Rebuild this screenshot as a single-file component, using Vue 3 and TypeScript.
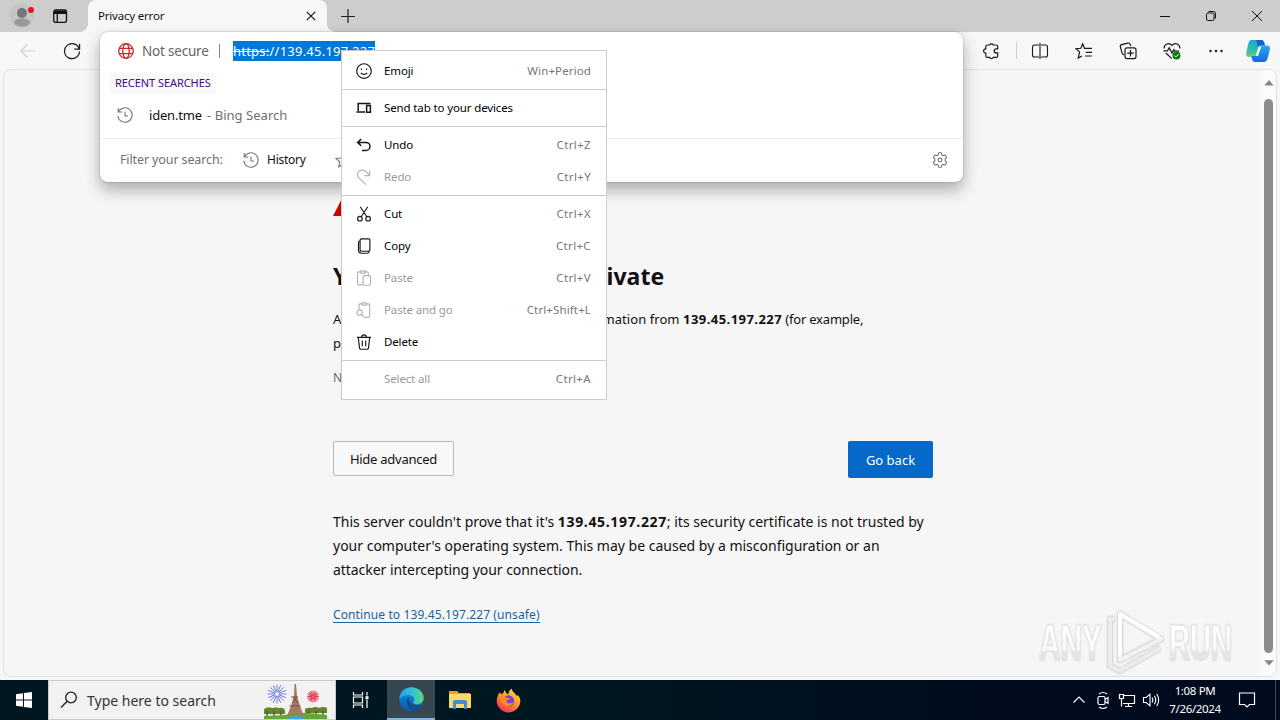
<script setup lang="ts">
interface MenuEntry {
  label: string
  keys?: string
  icon?: string
  off?: boolean
}

const groups: MenuEntry[][] = [
  [{ label: 'Emoji', keys: 'Win+Period', icon: 'emoji' }],
  [{ label: 'Send tab to your devices', icon: 'devices' }],
  [
    { label: 'Undo', keys: 'Ctrl+Z', icon: 'undo' },
    { label: 'Redo', keys: 'Ctrl+Y', icon: 'redo', off: true },
  ],
  [
    { label: 'Cut', keys: 'Ctrl+X', icon: 'cut' },
    { label: 'Copy', keys: 'Ctrl+C', icon: 'copy' },
    { label: 'Paste', keys: 'Ctrl+V', icon: 'paste', off: true },
    { label: 'Paste and go', keys: 'Ctrl+Shift+L', icon: 'pastego', off: true },
    { label: 'Delete', icon: 'trash' },
  ],
  [{ label: 'Select all', keys: 'Ctrl+A', off: true }],
]

const icons: Record<string, string> = {
  emoji: 'M8 .7a7.3 7.3 0 1 0 0 14.6A7.3 7.3 0 0 0 8 .7M5.4 5.6v1.3M10.6 5.6v1.3M4.8 9.8c1.5 2 4.9 2 6.4 0',
  devices: 'M2.2 11V3.6h12.3M.4 12h8.7M10.6 5.6h3.8v6.6h-3.8z',
  undo: 'M5.2 2 1.600 5.400l3.600 3.400M1.800 5.400h8.200a4 4 0 0 1 0 8H6',
  redo: 'M13.6 1.4v5.2H8.4M13.4 6.4 10.6 3C7.6-.1 3.300 1 2 3.600c-1 2-.4 3.900 1.200 5.500l6.800 6.500',
  cut: 'M4.300.8l6.700 10.200M11.700.8 5 11M3.900 10.400a2.300 2.300 0 1 0 0 4.600 2.300 2.300 0 0 0 0-4.600M12.100 10.400a2.300 2.300 0 1 0 0 4.600 2.300 2.300 0 0 0 0-4.600',
  copy: 'M5.600.8h6.800a1.500 1.500 0 0 1 1.500 1.500v9.400a1.500 1.500 0 0 1-1.500 1.500H5.600a1.500 1.500 0 0 1-1.500-1.500V2.300A1.500 1.500 0 0 1 5.600.8M4 2.700c-1 .3-1.500 1-1.500 2v7.600c0 1.900 1 2.900 3 2.900h5.800c.9 0 1.600-.6 1.800-1.700',
  paste: 'M6.500 14.800H2.600a1.100 1.100 0 0 1-1.100-1.100V3a1.100 1.100 0 0 1 1.100-1.100h2.200M9.200 1.900h2A1.100 1.100 0 0 1 12.300 3v1.800M4.800.8h4.400v2.300H4.800zM8.200 5.600h5.200a1.100 1.100 0 0 1 1.100 1.100v7.400a1.100 1.100 0 0 1-1.100 1.100H8.200a1.100 1.100 0 0 1-1.100-1.100V6.700a1.100 1.100 0 0 1 1.100-1.100',
  pastego: 'M3 7V3a1.100 1.100 0 0 1 1.100-1.100h2M10.500 1.900h2A1.100 1.100 0 0 1 13.600 3v11.200a1.100 1.100 0 0 1-1.100 1.100H8.500M6.100.8h4.400v2.300H6.100zM3.600 7.800a2.700 2.700 0 1 0 0 5.400 2.700 2.700 0 0 0 0-5.400M5.600 12.500 8 15',
  trash: 'M.9 3.400h14.200M5.700 3.200a2.300 2.300 0 0 1 4.600 0M2.300 3.600l1.200 10.300a1.400 1.400 0 0 0 1.400 1.300h6.200a1.400 1.400 0 0 0 1.400-1.300l1.200-10.300M6.300 6.400v5.800M9.700 6.400v5.800',
}

const rays: number[] = Array.from({ length: 16 }, (_, i) => i * 22.5)
</script>

<template>
  <div class="screen">
    <header class="tabs">
      <svg class="avatar" width="28" height="28" viewBox="0 0 28 28">
        <circle cx="14" cy="13.500" r="12" fill="#c4c4c4" />
        <circle cx="14" cy="11" r="5" fill="#777" />
        <path d="M6 21c0-3 3-4.500 8-4.500s8 1.500 8 4.500c-1.500 3-5 3.700-8 3.700s-6.500-.7-8-3.700z" fill="#999" />
        <circle cx="23" cy="8" r="3" fill="#e8111a" />
      </svg>
      <svg class="tabmenu" width="16" height="16" viewBox="0 0 16 16" fill="none" stroke="#111" stroke-width="1.300">
        <rect x="1.700" y="2" width="12.800" height="12.300" rx="2" />
        <path d="M2 3.700h12.300M2 5h12.300" stroke-width="1.800" />
        <path d="M5.300 5v9" />
      </svg>
      <div class="tab">
        <span>Privacy error</span>
        <svg width="10" height="10" viewBox="0 0 10 10" stroke="#111" stroke-width="1.200"><path d="M.8.8l8.400 8.400M9.200.8.8 9.200" /></svg>
      </div>
      <svg class="plus" width="14" height="14" viewBox="0 0 14 14" stroke="#222" stroke-width="1.200"><path d="M7 0v14M0 7.500h14" /></svg>
      <div class="winbtns">
        <svg width="12" height="12" viewBox="0 0 12 12" fill="none" stroke="#111"><path d="M1 6.500h10" /></svg>
        <svg width="12" height="12" viewBox="0 0 12 12" fill="none" stroke="#111"><rect x="1.500" y="3" width="7.500" height="7.500" rx="1.500" /><path d="M3.500 1.500h5a2 2 0 0 1 2 2v5" /></svg>
        <svg width="12" height="12" viewBox="0 0 12 12" fill="none" stroke="#111"><path d="M1 1l10 10M11 1 1 11" /></svg>
      </div>
    </header>

    <div class="toolbar">
      <svg class="back" width="16" height="16" viewBox="0 0 16 16" fill="none" stroke="#d0d0d0" stroke-width="1.200"><path d="M15.500 8H.8M7.200 1.500.8 8l6.400 6.500" /></svg>
      <svg class="reload" width="18" height="18" viewBox="0 0 18 18" fill="none" stroke="#181818" stroke-width="1.200"><path d="M16.200 7A7.500 7.500 0 1 0 16.500 9.500M16.600 1.700v5.500h-5.200" /></svg>
      <div class="tools">
        <svg width="18" height="18" viewBox="0 0 18 18" fill="none" stroke="#181818" stroke-width="1.200"><path d="M5.300 3h2.400a2 2 0 0 1 3.600 0h2.900a1.500 1.500 0 0 1 1.500 1.500v2.400h-1.500a2 2 0 0 0 0 4h1.500v3a1.500 1.500 0 0 1-1.500 1.500h-2.900a2 2 0 0 1-3.600 0H5.300a1.500 1.500 0 0 1-1.500-1.500v-2.700a2.200 2.200 0 0 1 0-4.400V4.500A1.500 1.500 0 0 1 5.300 3z" /></svg>
        <i class="bar"></i>
        <svg class="split" width="18" height="18" viewBox="0 0 18 18" fill="none" stroke="#181818" stroke-width="1.100"><path d="M6.500 3H3.500a2 2 0 0 0-2 2v8a2 2 0 0 0 2 2h3M11.500 3h3a2 2 0 0 1 2 2v8a2 2 0 0 1-2 2h-3M6.500 3H8M10 3h1.500M6.500 15H8M10 15h1.500M9 1v16" /></svg>
        <svg width="18" height="18" viewBox="0 0 18 18" fill="none" stroke="#181818" stroke-width="1.200"><path d="M9.500 6.500 7.700 1.800 5.800 6.300l-4.900.4 3.700 3.200-1.400 6.200L7 14M7.700 1.800 9.500 6.400H17M10.800 10.300H17M10.200 14h6.600" /></svg>
        <svg width="18" height="18" viewBox="0 0 18 18" fill="none" stroke="#181818" stroke-width="1.200"><rect x="6" y="5.800" width="11" height="10.800" rx="2" /><path d="M11.500 8v6.500M8.300 11.200h6.500M5 12.800C3.500 12.500 3.200 11.700 3 10.900L1.400 4.800c-.3-1 .2-1.900 1.200-2.200l6.300-1.500c1.200-.3 2 .2 2.300 1.300l.5 1.700" /></svg>
        <svg width="18" height="18" viewBox="0 0 18 18" fill="none" stroke="#181818" stroke-width="1.200"><path d="M1.200 6.500C.8 2.200 6-.3 9 3.500c3-3.800 8.200-1.300 7.800 3M2.800 11l6 5.600M.5 8.800h4l1.700-3 2.900 5.300 1.700-3.400 1.200 1.500h4" /><circle cx="13.500" cy="13.500" r="4" fill="#107c10" stroke="none" /><path d="m11.500 13.500 1.400 1.400 2.700-2.700" stroke="#fff" stroke-width="1" /></svg>
        <svg width="18" height="18" viewBox="0 0 18 18" fill="#181818"><circle cx="3.500" cy="9" r="1.200" /><circle cx="9" cy="9" r="1.200" /><circle cx="14.500" cy="9" r="1.200" /></svg>
      </div>
      <svg class="copilot" width="24" height="24" viewBox="0 0 24 24">
        <defs>
          <linearGradient id="cpA" x1="0" y1="0" x2="0" y2="1"><stop offset="0" stop-color="#17a5d9" /><stop offset=".6" stop-color="#34bea6" /><stop offset="1" stop-color="#70cc82" /></linearGradient>
          <linearGradient id="cpB" x1="0" y1="0" x2="0" y2="1"><stop offset="0" stop-color="#2aa8eb" /><stop offset="1" stop-color="#1767dc" /></linearGradient>
        </defs>
        <path d="M5.500 1h9.800c1.500 0 2.400 1 2.800 2.300L19 6.500h-5.600L10 16.500 3 18c-2.400 0-3.300-2-2.700-4.500L2.500 4C3 2 4 1 5.500 1z" fill="url(#cpA)" />
        <path d="M10 1h5.300c1.500 0 2.400 1 2.800 2.300L19 6.500h-4c-1.500 0-2.200.7-2.800 2z" fill="#1760c4" />
        <path d="M15 6.500h6c2.500 0 3.400 2 2.800 4.300l-2.200 8.500c-.5 2-1.700 3.700-4 3.700H9c-1.800 0-2.500-1.200-3-3L5.200 17h3c1.600 0 2.300-1 2.700-2.500L12.700 9c.4-1.500.9-2.500 2.300-2.500z" fill="url(#cpB)" />
        <path d="M12.700 7.500h2.700L12 17H9.700z" fill="#f4fbff" />
      </svg>
    </div>

    <main class="page">
      <div class="content">
        <svg class="warn" width="72" height="72" viewBox="0 0 72 72"><path d="M36 0 72 70H0z" fill="#d00000" /></svg>
        <h1>Your connection isn't private</h1>
        <p class="lead"><span>Attackers might be trying to steal your information from <b>139.45.197.227</b><span class="tail"> (for example,</span></span><br />passwords, messages, or credit cards).</p>
        <p class="code">NET::ERR_CERT_AUTHORITY_INVALID</p>
        <div class="buttons"><button class="plain">Hide advanced</button><button class="blue">Go back</button></div>
        <p class="body"><span>This server couldn't prove that it's <b>139.45.197.227</b>; its security certificate is not trusted by</span><br /><span>your computer's operating system. This may be caused by a misconfiguration or an</span><br /><span class="l3">attacker intercepting your connection.</span></p>
        <a class="unsafe">Continue to 139.45.197.227 (unsafe)</a>
      </div>
      <div class="scroll">
        <svg width="10" height="6" viewBox="0 0 10 6"><path d="M5 0l4.700 5.500H.3z" fill="#858585" /></svg>
        <div class="thumb"></div>
        <svg width="10" height="6" viewBox="0 0 10 6"><path d="M5 5.500 9.700.3H.3z" fill="#858585" /></svg>
      </div>
    </main>

    <section class="omnibox">
      <div class="address">
        <svg width="16" height="16" viewBox="0 0 16 16" fill="none" stroke="#c42b2b" stroke-width="1.300"><circle cx="8" cy="8" r="7.300" /><ellipse cx="8" cy="8" rx="3.200" ry="7.300" /><path d="M1.300 5.300h13.400M1.300 10.700h13.400" /></svg>
        <span class="notsec">Not secure</span><i></i>
        <span class="url"><s>https:</s>//139.45.197.227</span>
      </div>
      <div class="recent">RECENT SEARCHES</div>
      <div class="suggest">
        <svg width="16" height="16" viewBox="0 0 16 16" fill="none" stroke="#777" stroke-width="1.100"><path d="M1.200 1v4h4M1.500 4.800A7.200 7.200 0 1 1 .8 9M8 4.500V9h3" /></svg>
        <span class="term">iden.tme</span><span class="bing">- Bing Search</span>
      </div>
      <div class="filter">
        <span class="flabel">Filter your search:</span>
        <svg class="clock" width="16" height="16" viewBox="0 0 16 16" fill="none" stroke="#777" stroke-width="1.100"><path d="M1.200 1v4h4M1.500 4.800A7.200 7.200 0 1 1 .8 9M8 4.500V9h3" /></svg>
        <span class="history">History</span>
        <svg class="star" width="16" height="16" viewBox="0 0 16 16" fill="none" stroke="#777" stroke-width="1.100"><path d="m8 1.500 2 4.500 5 .5-3.700 3.300 1 5L8 12.200 3.700 14.800l1-5L1 6.500 6 6z" /></svg>
        <svg class="gear" width="16" height="16" viewBox="0 0 16 16" fill="none" stroke="#777" stroke-width="1.100"><path d="M6.600.8h2.800l.5 2.100 1.300.7 2-.6 1.500 2.500L13.200 7v2l1.500 1.500-1.500 2.500-2-.6-1.300.7-.5 2.100H6.600l-.5-2.100-1.300-.7-2 .6-1.500-2.500L2.800 9V7L1.300 5.500 2.800 3l2 .6 1.300-.7z" stroke-linejoin="round" /><circle cx="8" cy="8" r="1.900" /></svg>
      </div>
    </section>

    <nav class="menu">
      <div v-for="(g, gi) in groups" :key="gi" class="group">
        <div v-for="m in g" :key="m.label" class="item" :class="{ off: m.off }">
          <svg width="16" height="16" viewBox="0 0 16 16" fill="none" stroke="currentColor" :stroke-width="m.icon === 'devices' || m.icon === 'undo' ? 1.5 : 1.15">
            <path v-if="m.icon" :d="icons[m.icon]" />
          </svg>
          <span class="label">{{ m.label }}</span>
          <span v-if="m.keys" class="keys" :class="{ wide: m.keys.length > 6 }">{{ m.keys }}</span>
        </div>
      </div>
    </nav>

    <svg class="mark" width="212" height="70" viewBox="0 0 212 70">
      <defs><linearGradient id="wm" x1="0" y1="0" x2="0" y2="1"><stop offset=".3" stop-color="#fff" /><stop offset=".62" stop-color="#f8f8f8" /><stop offset=".66" stop-color="#e6e6e6" /><stop offset="1" stop-color="#e4e4e4" /></linearGradient></defs>
      <g fill="url(#wm)" stroke="#dedede" stroke-width=".8">
        <text x="5" y="51" textLength="63" lengthAdjust="spacingAndGlyphs">ANY</text>
        <text x="135" y="51" textLength="63" lengthAdjust="spacingAndGlyphs">RUN</text>
      </g>
      <g fill="none" stroke-linejoin="round">
        <path d="M81 10h-5v47l10 5 40-23" stroke="#dadada" stroke-width="6" /><path d="M86 5v46l41-21z" stroke="#dadada" stroke-width="6" />
        <path d="M81 10h-5v47l10 5 40-23" stroke="#ececec" stroke-width="4" /><path d="M86 5v46l41-21z" stroke="#f2f2f2" stroke-width="4" /><path d="M86 46V5l39 23" stroke="#fff" stroke-width="4" />
      </g>
    </svg>

    <footer class="taskbar">
      <div class="start"><svg width="16" height="16" viewBox="0 0 16 16" fill="#fff"><path d="M0 2.300 7 1.300v6.200H0zM8 1.100 16 0v7.500H8zM0 8.500h7v6.200L0 13.700zM8 8.500h8V16l-8-1.100z" /></svg></div>
      <div class="search">
        <svg class="lens" width="18" height="18" viewBox="0 0 18 18" fill="none" stroke="#222" stroke-width="1.300"><circle cx="11" cy="6.500" r="5.300" /><path d="M7.200 10.300 1 16.500" /></svg>
        <span>Type here to search</span>
        <svg class="paris" width="64" height="37" viewBox="0 0 64 37">
          <path d="M0 27q4-3 8-1 4-1 7 0 4-1 6 2v4H0zM41 27q3-2 7-1 3-2 7 0 4-2 8 0v5H41z" fill="#60852d" />
          <path d="M3 29v5M10 29v5M17 29v5M45 29v5M52 29v5M59 29v5" stroke="#71512a" stroke-width="1.500" />
          <path d="M0 37v-3l20-1 10-2h14l19 2v4z" fill="#60a83a" />
          <path d="M24 37q7-7 17 0z" fill="#4b9de0" />
          <path d="M30.500 2h1.500l1 12 3 10 4 10h-5q-4-6-8 0h-4l4-10 3-10z" fill="#a87961" />
          <path d="M27 15h7M25.500 24h11M28 21l5-6M34 21l-5-6" stroke="#765142" />
          <g stroke="#5863df" stroke-width=".8"><line v-for="r in rays" :key="r" x1="13" y1="10" x2="13" y2="2.500" :transform="`rotate(${r} 13 12)`" /></g>
          <g stroke="#e54155" stroke-width="1.100"><line v-for="r in rays" :key="r" x1="49" y1="13.800" x2="49" y2="8.500" :transform="`rotate(${r} 49 14.500)`" /></g>
        </svg>
      </div>
      <div class="tile taskview"><svg width="18" height="18" viewBox="0 0 18 18" fill="none" stroke="#fff" stroke-width="1.200"><path d="M1.500 1v3h9V1M1.500 17v-3h9v3M1.500 6h9v6h-9zM15 1v3.500M15 8.500V17" /><path d="M13.500 5.200h3v3h-3z" fill="#fff" stroke="none" /></svg></div>
      <div class="tile active">
        <svg width="25" height="25" viewBox="0 0 24 24">
          <defs>
            <linearGradient id="eg" x1="0" y1="0" x2="1" y2="0"><stop offset="0" stop-color="#279fe0" /><stop offset=".55" stop-color="#35c1d5" /><stop offset="1" stop-color="#58db7a" /></linearGradient>
            <linearGradient id="eb" x1="0" y1="0" x2="0" y2="1"><stop offset="0" stop-color="#1795e5" /><stop offset="1" stop-color="#0757a8" /></linearGradient>
          </defs>
          <path d="M.3 12C.3 5 5 .3 12 .3S20 14 23 17c-2 4-6 6.700-11 6.700S.3 19 .3 12z" fill="url(#eb)" />
          <path d="M.5 10C2 3.500 6.500.3 12 .3c7 0 11.700 5 11.700 10.200 0 4-3 6-6 6s-4.700-1.400-3.700-2.700c2-2.600-.2-6-4.500-6C5 7.800 1.500 9 .5 12z" fill="url(#eg)" />
          <path d="M9.300 9.500c-4 4-1.300 11.500 5 13.300 3.500-.3 6.500-2.800 8-5.500-6.500 3-13.500-.3-13-7.800z" fill="#114e8e" />
          <path d="M10.500 12c.5 5.500 7.500 7 12 4.800.7-.2.8.1.5.6C18 20.500 10 19 10.500 12z" fill="#36474f" />
        </svg>
      </div>
      <div class="tile">
        <svg width="24" height="20" viewBox="0 0 24 20"><path d="M1 1h8l2 2h11v4H1z" fill="#e5a426" /><path d="M1 4h22v14H1z" fill="#ffd76a" /><path d="M5 19v-7q0-2 2-2h10q2 0 2 2v7h-3v-5H8v5z" fill="#3f8fcc" /></svg>
      </div>
      <div class="tile">
        <svg width="25" height="25" viewBox="0 0 24 24">
          <defs><linearGradient id="ff" x1=".8" y1="0" x2=".2" y2="1"><stop offset="0" stop-color="#ffe14a" /><stop offset=".45" stop-color="#ff9a24" /><stop offset="1" stop-color="#f5245e" /></linearGradient></defs>
          <path d="M3.500 4 5 6q1-.8 2-1l1-3 2.500 3.500L12 6c0-2 1-4 3-5.500 0 3 4 4.500 5 7.500l.8-1.500C23 9 23.500 11 23.300 13c-.4 6-5.300 10.500-11.300 10.500S.7 18.500.7 12.500c0-3 1-6 2.800-8.500z" fill="url(#ff)" />
          <circle cx="12" cy="12.500" r="5.500" fill="#7a42d8" />
          <path d="M5 8c2-.7 4 0 5 1.500l3.500.2c-.5 2-3.500 1.600-3.700 3.300 2 3 5 1.500 6.700.5-.5 4-6 5.500-9 3C5 14.500 4.500 11 5 8z" fill="#ff8c20" />
        </svg>
      </div>
      <div class="tray">
        <svg width="24" height="20" viewBox="0 0 24 20" fill="none" stroke="#fff" stroke-width="1.200"><path d="m6.500 12.500 5.500-5.500 5.500 5.500" /></svg>
        <svg width="24" height="20" viewBox="0 0 24 20" fill="none" stroke="#fff" stroke-width="1.200"><rect x="7" y="6.500" width="7" height="8" rx="1.500" /><path d="m14 9.500 3-2v6l-3-2M8 4q4-3 8 0M8 17q4 3 8 0" /></svg>
        <svg width="24" height="20" viewBox="0 0 24 20" fill="none" stroke="#fff" stroke-width="1.200"><path d="M8 5.500h11.500v8H8M13.500 13.500v3M10 16.500h7M4.500 4.500h4v4h-4zM6.500 8.500v8" /></svg>
        <svg width="24" height="20" viewBox="0 0 24 20" fill="none" stroke="#fff" stroke-width="1.100"><path d="M4.500 7.500h2.700L11 4.200v11.600l-3.800-3.300H4.500zM13 7.500q1.800 2.500 0 5M15.300 5.800q3 4.200 0 8.400M17.700 4q4 6 0 12" /></svg>
        <div class="time"><span>1:08 PM</span><span>7/26/2024</span></div>
        <svg class="notif" width="18" height="18" viewBox="0 0 18 18" fill="none" stroke="#fff" stroke-width="1.200"><path d="M1.500 2h15v11.500h-5L9 16l-2.500-2.500h-5z" /></svg>
        <i></i>
      </div>
    </footer>
  </div>
</template>

<style>
html, body { margin: 0; overflow: hidden; }
</style>
<style scoped>
* { box-sizing: border-box; }
svg { display: block; flex: none; }
.screen { position: relative; width: 1280px; height: 720px; display: flex; flex-direction: column; overflow: hidden; background: #f7f7f7; font-family: "Noto Sans", "Open Sans", sans-serif; font-size: 12px; color: #101010; white-space: nowrap; }
.tabs { height: 32px; flex: none; display: flex; align-items: center; background: #cdcdcd; }
.avatar { margin-left: 8px; }
.tabmenu { margin-left: 16px; }
.tab { position: relative; margin-left: 20px; width: 239px; height: 32px; display: flex; align-items: center; justify-content: space-between; padding: 0 11px 0 10px; background: #f7f7f7; border-radius: 8px 8px 0 0; font-size: 11.500px; letter-spacing: -0.200px; }
.tab span { line-height: 16px; }
.tab::before, .tab::after { content: ""; position: absolute; bottom: 0; width: 8px; height: 8px; }
.tab::before { left: -8px; background: radial-gradient(circle at 0 0, transparent 7.500px, #f7f7f7 8px); }
.tab::after { right: -8px; background: radial-gradient(circle at 100% 0, transparent 7.500px, #f7f7f7 8px); }
.plus { margin-left: 14px; }
.winbtns { margin-left: auto; display: flex; gap: 34px; padding-right: 17px; }
.toolbar { height: 37px; flex: none; display: flex; align-items: center; }
.back { margin-left: 20px; }
.reload { margin-left: 27px; }
.tools { margin-left: 901px; display: flex; align-items: center; gap: 26px; }
.bar { width: 1px; height: 17px; background: #d0d0d0; margin-left: -10px; }
.split { margin-left: -12px; }
.copilot { margin-left: 21px; }
.page { height: 608px; margin: 0 3px; display: flex; border: 1px solid #e1e1e1; border-radius: 8px; background: #f6f6f6; overflow: hidden; }
.content { flex: 1; padding: 76px 327px 0 329px; }
.warn { height: 72px; }
h1 { margin: 42px 0 0; font-size: 23px; line-height: 32px; font-weight: 700; letter-spacing: 0.030px; color: #111; }
.lead { margin: 15px 0 0; font-size: 13px; line-height: 24px; letter-spacing: 0.060px; }
.lead b { letter-spacing: 0.450px; }
.tail { letter-spacing: -0.200px; }
.code { margin: 11px 0 0; font-size: 12px; line-height: 24px; letter-spacing: -0.400px; color: #666; }
.buttons { margin-top: 51px; width: 600px; display: flex; justify-content: space-between; align-items: flex-start; }
button { font-family: inherit; border-radius: 2px; padding: 0; }
.plain { width: 121px; height: 35px; border: 1px solid #b9b9b9; background: #f8f8f8; color: #111; font-size: 13px; letter-spacing: -0.250px; }
.blue { width: 85px; height: 37px; border: 0; background: #0469c8; color: #fff; font-size: 13px; }
.body { margin: 32px 0 0; font-size: 14px; line-height: 24px; }
.body b { letter-spacing: 0.650px; }
.l3 { letter-spacing: -0.050px; }
.unsafe { display: inline-block; margin-top: 25px; font-size: 12px; letter-spacing: 0.110px; line-height: 15px; color: #1764a3; border-bottom: 1px solid #1764a3; }
.scroll { width: 15px; display: flex; flex-direction: column; align-items: center; padding: 10px 0 0; background: #fbfbfb; }
.thumb { width: 9px; height: 554px; margin: 13px 0 7px; border-radius: 5px; background: #8b8b8b; }
.omnibox { position: absolute; left: 100px; top: 32px; width: 863px; height: 150px; background: #fff; border-radius: 8px; box-shadow: 0 0 2px rgba(0,0,0,.3), 0 8px 16px rgba(0,0,0,.3); }
.address { height: 38px; display: flex; align-items: center; padding-left: 18px; color: #666; font-size: 13.500px; }
.notsec { margin-left: 8px; width: 67px; letter-spacing: -0.200px; }
.address i { width: 1px; height: 14px; margin-left: 10px; background: #888; }
.url { margin-left: 13px; height: 20px; line-height: 20px; width: 142px; background: #0078d7; color: #fff; font-size: 13px; letter-spacing: 0.230px; }
.recent { margin: 3px 0 0 10px; width: 106px; height: 21px; padding-left: 5px; line-height: 19px; background: #f8f8f8; color: #4b087d; font-size: 11px; letter-spacing: -0.060px; }
.suggest { display: flex; align-items: center; height: 24px; margin-top: 9px; padding-left: 17px; font-size: 13px; }
.term { margin-left: 16px; width: 58px; letter-spacing: -0.200px; }
.bing { color: #707070; letter-spacing: 0.040px; }
.filter { display: flex; align-items: center; height: 44px; margin-top: 11px; border-top: 1px solid #ececec; padding: 0 15px 2px 20px; }
.flabel { width: 103px; color: #707070; font-size: 12.500px; letter-spacing: -0.120px; }
.clock { margin-left: 20px; }
.history { margin-left: 8px; width: 41px; font-size: 12px; letter-spacing: -0.250px; }
.star { margin-left: 27px; }
.gear { margin-left: auto; }
.menu { position: absolute; left: 341px; top: 50px; width: 266px; height: 350px; padding-top: 4px; background: #fff; border: 1px solid #ccc; }
.group + .group { margin-top: 2px; border-top: 1px solid #ccc; padding-top: 2px; }
.item { height: 32px; display: flex; align-items: center; padding: 0 15px 0 14px; color: #181818; font-size: 11.500px; }
.item span { padding-bottom: 2px; }
.label { margin-left: 12px; letter-spacing: -0.130px; color: #000; }
.keys { margin-left: auto; color: #777; letter-spacing: 0.350px; }
.keys.wide { letter-spacing: 0.120px; }
.off, .off .label { color: #999; }
.off svg { color: #b3b3b3; }
.mark { position: absolute; left: 1034px; top: 609px; font-family: "Liberation Sans", sans-serif; font-weight: 700; font-size: 50px; filter: drop-shadow(0 0 1px rgba(0,0,0,.12)); }
.taskbar { margin-top: auto; height: 40px; flex: none; display: flex; background: linear-gradient(90deg, #001721 0, #001721 45%, #000b1d 80%); }
.start { width: 48px; display: flex; align-items: center; justify-content: center; }
.search { width: 288px; display: flex; align-items: center; padding: 0 7px 0 11px; background: #f2f2f2; border: 1px solid #c9c9c9; color: #333; font-size: 14px; }
.search span { margin-left: 9px; }
.paris { margin-left: auto; align-self: flex-end; }
.tile { width: 49px; display: flex; align-items: center; justify-content: center; }
.taskview { width: 51px; padding-right: 2px; }
.active { width: 48px; background: #36474f; border-bottom: 2px solid #76b9ed; }
.tray { margin-left: auto; display: flex; align-items: center; color: #fff; }
.time { width: 62px; margin-left: 1px; display: flex; flex-direction: column; align-items: center; font-size: 11.500px; line-height: 18px; letter-spacing: -0.350px; }
.notif { margin-left: 12px; }
.tray i { width: 1px; height: 40px; margin: 0 4px 0 19px; background: #3a4657; }
</style>
